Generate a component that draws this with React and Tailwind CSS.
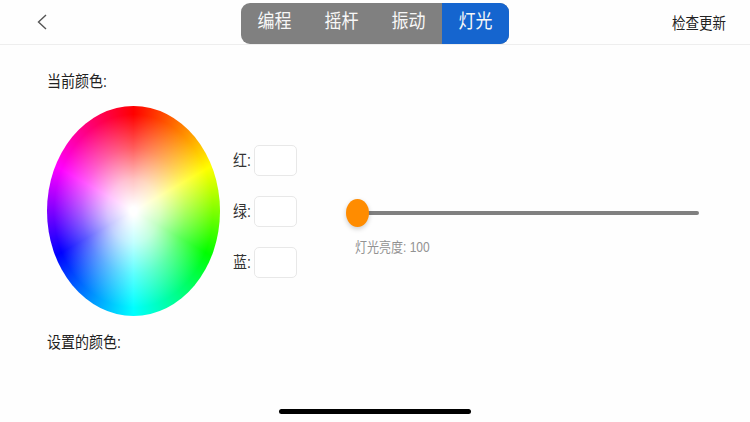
const FONT = "font-['Liberation_Sans','Noto_Sans_CJK_SC',sans-serif]";

const TABS = ["编程", "摇杆", "振动", "灯光"];

function Header() {
  return (
    <div className="h-[45px] shrink-0 flex items-start border-b border-[#eeeeee]">
      <div className="w-[241px] h-[44px] pl-[36px] flex items-center">
        <svg width="13" height="18" viewBox="0 0 13 18" fill="none" stroke="#555555" strokeWidth="1.4" className="overflow-visible">
          <path d="M10 2 L2.5 9 L10 16" />
        </svg>
      </div>
      <div className="mt-[3px] w-[268px] h-[41px] flex rounded-[9px] overflow-hidden bg-[#808080] text-[17px] text-[#f7f7f7]">
        {TABS.map((t, i) => (
          <div key={t} className={`flex-1 flex items-start pt-[6px] justify-center ${i === 3 ? "bg-[#1565cf]" : ""}`}>
            <span className="scale-y-[1.15]">{t}</span>
          </div>
        ))}
      </div>
      <div className="flex-1 h-[44px] pr-[24px] pt-[14px] text-right text-[13.5px] leading-[20px] text-[#222222] scale-y-[1.15]">检查更新</div>
    </div>
  );
}

function ColorField({ label }) {
  return (
    <div className="flex items-center gap-[3px]">
      <span className="w-[18px] text-[14px] text-[#333333] scale-y-[1.15]">{label}:</span>
      <div className="w-[43px] h-[31px] rounded-[5px] border border-[#e8e8e8] bg-white" />
    </div>
  );
}

export default function App() {
  return (
    <div className={`${FONT} w-[750px] h-[422px] overflow-hidden flex flex-col bg-[#fefefe]`}>
      <Header />
      <div className="flex-1 pl-[47px] flex flex-col">
        <div className="mt-[26px] h-[20px] leading-[20px] text-[14px] text-[#222222] scale-y-[1.15]">当前颜色:</div>
        <div className="mt-[15px] flex items-center h-[210px]">
          <div className="w-[173px] h-[210px] rounded-[50%] [background:radial-gradient(closest-side,#ffffff_4%,rgba(255,255,255,0.76)_30%,rgba(255,255,255,0.36)_60%,rgba(255,255,255,0)_92%),conic-gradient(#ff0000,#ffff00,#00ff00,#00ffff,#0000ff,#ff00ff,#ff0000)]" />
          <div className="ml-[13px] flex flex-col gap-[20px]">
            <ColorField label="红" />
            <ColorField label="绿" />
            <ColorField label="蓝" />
          </div>
          <div className="ml-[49px] w-[353px] flex flex-col">
            <div className="flex items-center mt-[34px]">
              <div className="relative z-10 w-[23px] h-[28px] rounded-[50%] bg-[#ff8c00] shadow-[0_2px_5px_rgba(0,0,0,0.2)]" />
              <div className="flex-1 h-[4px] -ml-[2px] rounded-full bg-[#808080]" />
            </div>
            <div className="mt-[10px] ml-[9px] h-[20px] leading-[20px] text-[12px] text-[#929292] scale-y-[1.15] origin-center">灯光亮度: 100</div>
          </div>
        </div>
        <div className="mt-[16px] h-[20px] leading-[20px] text-[14px] text-[#222222] scale-y-[1.15]">设置的颜色:</div>
        <div className="flex-1 flex items-end justify-center pb-[8px] pr-[47px]">
          <div className="w-[192px] h-[5px] rounded-full bg-black" />
        </div>
      </div>
    </div>
  );
}
